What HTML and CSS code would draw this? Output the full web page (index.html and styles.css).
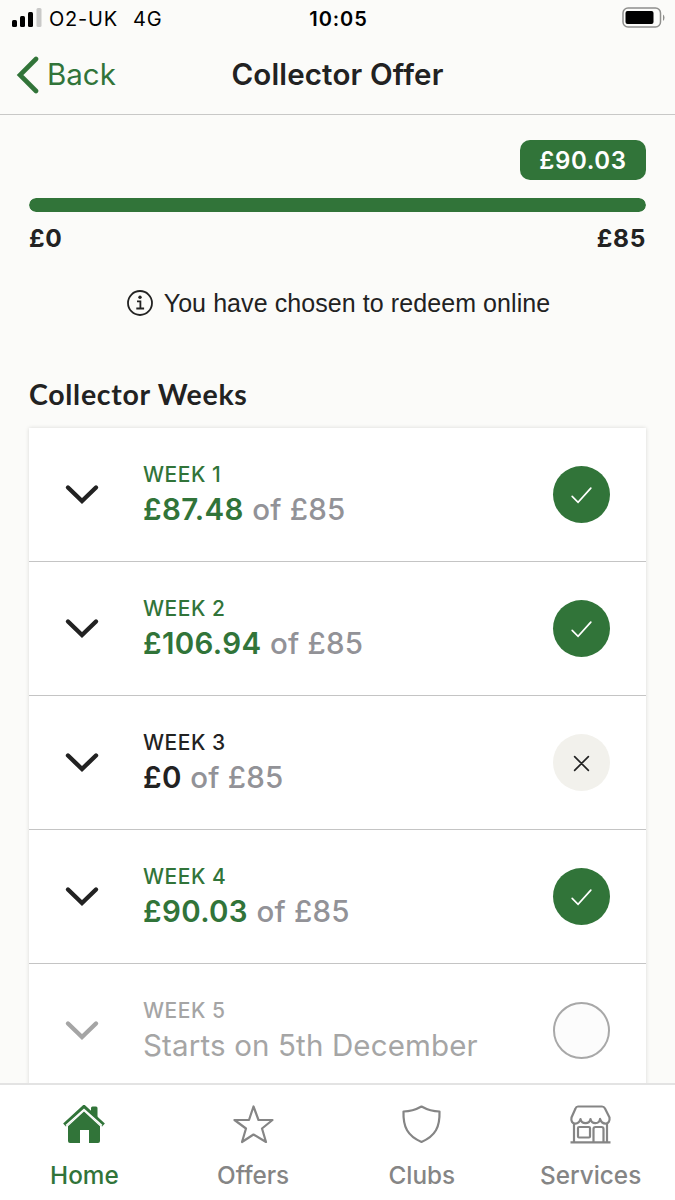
FILE: index.html
```html
<!DOCTYPE html>
<html lang="en">
<head>
  <meta charset="UTF-8" />
  <meta name="viewport" content="width=device-width, initial-scale=1.0"/>
  <title>Collector Offer</title>
  <link rel="stylesheet" href="styles.css">
</head>
<body>

  <div class="status-bar">
    <div class="carrier">
      <svg class="signal" width="30" height="20" viewBox="0 0 30 20">
        <rect x="0" y="12" width="5" height="7" rx="1.5"/>
        <rect x="8" y="8" width="5" height="11" rx="1.5"/>
        <rect x="16" y="4" width="5" height="15" rx="1.5"/>
        <rect class="signal-off" x="24.500" y="0" width="5" height="19" rx="1.5"/>
      </svg>
      <span class="network">O2-UK</span>
      <span>4G</span>
    </div>
    <div class="clock">10:05</div>
    <div class="battery">
      <svg width="44" height="22" viewBox="0 0 44 22">
        <rect x="2" y="1" width="37.500" height="19" rx="5" fill="none" stroke="#8f8f8d" stroke-width="1.500"/>
        <rect x="4.500" y="4" width="28" height="13" rx="2" fill="#000"/>
        <path d="M42 7.500v6.500q1.500-1 1.500-3.200T42 7.500z" fill="#8f8f8d"/>
      </svg>
    </div>
  </div>

  <header class="nav-bar">
    <a class="back">
      <svg width="24" height="40" viewBox="0 0 24 40"><path d="M20 5L4 21L20 37" fill="none" stroke="#317439" stroke-width="4.600" stroke-linecap="round" stroke-linejoin="miter"/></svg>
      <span>Back</span>
    </a>
    <h1>Collector Offer</h1>
  </header>

  <main class="content">
    <section class="progress">
      <div class="amount">£90.03</div>
      <div class="track"><div class="fill" style="width: 100%"></div></div>
      <div class="scale"><span>£0</span><span>£85</span></div>
    </section>

    <p class="info">
      <svg width="28" height="28" viewBox="0 0 28 28" fill="none" stroke="#222" stroke-width="1.800">
        <circle cx="14" cy="14" r="12"/>
        <circle cx="14" cy="8.200" r="1.700" fill="#222" stroke="none"/>
        <path d="M11 12.300h3.400v7.200M10.300 19.500h7.800"/>
      </svg>
      <span>You have chosen to redeem online</span>
    </p>

    <h2>Collector Weeks</h2>

    <div class="weeks">
      <div class="week done">
        <svg class="chevron" viewBox="0 0 34 20"><path d="M3 2.500L17 16L31 2.500"/></svg>
        <div class="text">
          <div class="label">WEEK 1</div>
          <div class="value"><b>£87.48</b> <span class="goal">of £85</span></div>
        </div>
        <div class="mark"><svg viewBox="0 0 58 58"><path d="M19.500 31L25.500 37L38.500 22.500"/></svg></div>
      </div>
      <div class="week done">
        <svg class="chevron" viewBox="0 0 34 20"><path d="M3 2.500L17 16L31 2.500"/></svg>
        <div class="text">
          <div class="label">WEEK 2</div>
          <div class="value"><b>£106.94</b> <span class="goal">of £85</span></div>
        </div>
        <div class="mark"><svg viewBox="0 0 58 58"><path d="M19.500 31L25.500 37L38.500 22.500"/></svg></div>
      </div>
      <div class="week missed">
        <svg class="chevron" viewBox="0 0 34 20"><path d="M3 2.500L17 16L31 2.500"/></svg>
        <div class="text">
          <div class="label">WEEK 3</div>
          <div class="value"><b>£0</b> <span class="goal">of £85</span></div>
        </div>
        <div class="mark"><svg viewBox="0 0 58 58"><path d="M22 23L36 37M36 23L22 37"/></svg></div>
      </div>
      <div class="week done">
        <svg class="chevron" viewBox="0 0 34 20"><path d="M3 2.500L17 16L31 2.500"/></svg>
        <div class="text">
          <div class="label">WEEK 4</div>
          <div class="value"><b>£90.03</b> <span class="goal">of £85</span></div>
        </div>
        <div class="mark"><svg viewBox="0 0 58 58"><path d="M19.500 31L25.500 37L38.500 22.500"/></svg></div>
      </div>
      <div class="week upcoming">
        <svg class="chevron" viewBox="0 0 34 20"><path d="M3 2.500L17 16L31 2.500"/></svg>
        <div class="text">
          <div class="label">WEEK 5</div>
          <div class="value">Starts on 5th December</div>
        </div>
        <div class="mark"></div>
      </div>
    </div>
  </main>

  <nav class="tabs">
    <a class="tab active">
      <svg width="44" height="40" viewBox="0 0 44 40">
        <path d="M29 7V3q0-1.500 1.500-1.500H34q1.500 0 1.500 1.500V13z" fill="#317439"/>
        <path d="M2.500 20L22 2L41.500 20" fill="none" stroke="#317439" stroke-width="4"/>
        <path d="M22 6.500L38 21.300V36q0 2-2 2H27V25H18V38H8q-2 0-2-2V21.300z" fill="#317439"/>
        <path d="M4 20.500L22 4.500L40 20.500" fill="none" stroke="#fff" stroke-width="1.600"/>
      </svg>
      <span>Home</span>
    </a>
    <a class="tab">
      <svg class="line" width="44" height="40" viewBox="0 0 44 40"><path d="M22.500 1.500L27.500 15H41.500L31 23.500L35 37L22.500 29.500L11 37L15 23.500L3.500 15H18z"/></svg>
      <span>Offers</span>
    </a>
    <a class="tab">
      <svg class="line" width="44" height="40" viewBox="0 0 44 40"><path d="M21.500 1.500Q12.500 6.500 3.500 6.500C3 22 7.500 31 21.500 37C35.500 31 40 22 39.500 6.500Q30.500 6.500 21.500 1.500z"/></svg>
      <span>Clubs</span>
    </a>
    <a class="tab">
      <svg class="line" width="44" height="40" viewBox="0 0 44 40">
        <path d="M9 1.500H33Q35 1.500 36 3.500L40.500 12.500C41.500 20 33.500 20.500 31 14C30.500 19.500 22.500 19.500 21.500 14C20.500 19.500 12.500 19.500 11.500 14C9.500 20.500 1 20 2.500 12.500L6.500 3.500Q7.200 1.500 9 1.500z"/>
        <path d="M5 18V37M38 18V37M1.500 37.300H41.500"/>
        <rect x="9" y="22" width="12" height="10.500" rx="1"/>
        <path d="M24.500 37V24q0-2 2-2h6q2 0 2 2V37"/>
      </svg>
      <span>Services</span>
    </a>
  </nav>

</body>
</html>
```

FILE: styles.css
```css
* { box-sizing: border-box; }
body {
  margin: 0;
  height: 1200px;
  display: flex;
  flex-direction: column;
  overflow: hidden;
  background: #fbfbf9;
  color: #222;
  font-family: Inter, "Liberation Sans", sans-serif;
}
svg { display: block; flex: none; }

.status-bar {
  display: grid;
  grid-template-columns: 1fr auto 1fr;
  align-items: center;
  height: 36px;
  padding: 1px 10px 0 12px;
  color: #000;
  font-size: 20px;
}
.carrier { display: flex; align-items: center; letter-spacing: 0.8px; }
.signal { margin: -2px 7px 0 0; }
.signal-off { fill: #c9c9c8; }
.network { margin-right: 15px; }
.clock { font-weight: 600; letter-spacing: 0.9px; }
.battery { display: flex; justify-content: flex-end; margin-top: -1px; }

.nav-bar {
  display: grid;
  grid-template-columns: 1fr auto 1fr;
  align-items: center;
  height: 79px;
  padding: 0 16px 2px;
  border-bottom: 1px solid #c8c8c7;
}
.back { display: flex; align-items: center; gap: 7px; color: #317439; font-size: 29.5px; }
.nav-bar h1 { margin: 0; font-size: 29.5px; font-weight: 600; letter-spacing: 0.15px; }

.content { flex: 1; min-height: 0; overflow: hidden; padding: 25px 29px 0; }
.progress { display: flex; flex-direction: column; }
.amount {
  align-self: flex-end;
  width: 126px;
  height: 40px;
  line-height: 41px;
  border-radius: 10px;
  background: #317439;
  color: #fff;
  text-align: center;
  font-size: 24px;
  font-weight: 600;
  letter-spacing: 0.6px;
}
.track { height: 14px; margin-top: 18px; border-radius: 7px; overflow: hidden; }
.fill { height: 100%; border-radius: 7px; background: #317439; }
.scale {
  display: flex;
  justify-content: space-between;
  margin-top: 11px;
  line-height: 30px;
  font-size: 24.5px;
  font-weight: 700;
  letter-spacing: 0.7px;
}

.info {
  display: flex;
  justify-content: center;
  align-items: center;
  gap: 10px;
  margin: 36px 0 0;
  padding-left: 1px;
  height: 28px;
  font-family: "Liberation Sans", sans-serif;
  font-size: 25px;
  letter-spacing: 0.08px;
}
.content h2 {
  margin: 58px 0 0;
  height: 53px;
  line-height: 38px;
  font-family: Lato, sans-serif;
  font-size: 28.5px;
  font-weight: 700;
  letter-spacing: 0.7px;
}

.weeks { background: #fff; box-shadow: 0 0 4px rgba(0, 0, 0, 0.14); }
.week {
  display: flex;
  align-items: center;
  height: 134px;
  padding: 0 36px;
  border-bottom: 1px solid #c4c4c4;
}
.chevron { width: 34px; height: 20px; overflow: visible; fill: none; stroke: #222; stroke-width: 4.4; stroke-linecap: round; }
.text { flex: 1; margin-left: 44px; padding-bottom: 3px; }
.label { line-height: 32px; font-size: 21px; font-weight: 500; letter-spacing: 0.5px; }
.value { line-height: 36px; font-size: 29.5px; letter-spacing: 0.15px; color: #929297; }
.value b { font-weight: 600; letter-spacing: 0.35px; }
.goal { font-weight: 500; letter-spacing: 0.2px; }
.mark { width: 57px; height: 57px; border-radius: 50%; }
.mark svg { fill: none; stroke: #fff; stroke-width: 1.7; stroke-linecap: round; }
.done .label, .done b { color: #317439; }
.done .mark { background: #317439; }
.missed b { color: #222; }
.missed .mark { background: #f2f1ec; }
.missed .mark svg { stroke: #222; }
.upcoming .label, .upcoming .value { color: #a5a5a5; }
.upcoming .chevron { stroke: #a5a5a5; }
.upcoming .mark { border: 2px solid #a8a8a8; background: #fcfcfc; }

.tabs {
  display: grid;
  grid-template-columns: repeat(4, 1fr);
  height: 117px;
  border-top: 2px solid #e3e3e3;
  background: #fff;
}
.tab {
  display: flex;
  flex-direction: column;
  align-items: center;
  padding-top: 20px;
  color: #858585;
  font-size: 24.3px;
  font-weight: 500;
}
.tab span { margin-top: 15px; line-height: 30px; }
.active { color: #317439; }
.line { fill: none; stroke: #858585; stroke-width: 2.2; stroke-linejoin: round; }
```
